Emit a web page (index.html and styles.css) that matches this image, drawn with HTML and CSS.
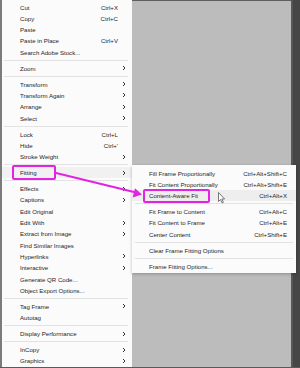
FILE: index.html
```html
<!DOCTYPE html>
<html>
    <head>
        <meta charset="utf-8">
        <title>Context menu - Fitting</title>
        <link rel="stylesheet" href="styles.css">
    </head>
    <body>
        <div class="screen">
            <div class="edge"></div>
            <div class="menu main">
                <div class="item"><span class="lbl">Cut</span><span class="key">Ctrl+X</span><span class="arr"></span></div>
                <div class="item"><span class="lbl">Copy</span><span class="key">Ctrl+C</span><span class="arr"></span></div>
                <div class="item"><span class="lbl">Paste</span><span class="arr"></span></div>
                <div class="item"><span class="lbl">Paste in Place</span><span class="key">Ctrl+V</span><span class="arr"></span></div>
                <div class="item"><span class="lbl">Search Adobe Stock...</span><span class="arr"></span></div>
                <div class="sep"></div>
                <div class="item"><span class="lbl">Zoom</span><span class="arr sub-on"></span></div>
                <div class="sep"></div>
                <div class="item"><span class="lbl">Transform</span><span class="arr sub-on"></span></div>
                <div class="item"><span class="lbl">Transform Again</span><span class="arr sub-on"></span></div>
                <div class="item"><span class="lbl">Arrange</span><span class="arr sub-on"></span></div>
                <div class="item"><span class="lbl">Select</span><span class="arr sub-on"></span></div>
                <div class="sep"></div>
                <div class="item"><span class="lbl">Lock</span><span class="key">Ctrl+L</span><span class="arr"></span></div>
                <div class="item"><span class="lbl">Hide</span><span class="key">Ctrl+'</span><span class="arr"></span></div>
                <div class="item"><span class="lbl">Stroke Weight</span><span class="arr sub-on"></span></div>
                <div class="sep"></div>
                <div class="item hot"><span class="lbl">Fitting</span><span class="arr sub-on"></span></div>
                <div class="sep"></div>
                <div class="item"><span class="lbl">Effects</span><span class="arr sub-on"></span></div>
                <div class="item"><span class="lbl">Captions</span><span class="arr sub-on"></span></div>
                <div class="item"><span class="lbl">Edit Original</span><span class="arr"></span></div>
                <div class="item"><span class="lbl">Edit With</span><span class="arr sub-on"></span></div>
                <div class="item"><span class="lbl">Extract from Image</span><span class="arr sub-on"></span></div>
                <div class="item"><span class="lbl">Find Similar Images</span><span class="arr"></span></div>
                <div class="item"><span class="lbl">Hyperlinks</span><span class="arr sub-on"></span></div>
                <div class="item"><span class="lbl">Interactive</span><span class="arr sub-on"></span></div>
                <div class="item"><span class="lbl">Generate QR Code...</span><span class="arr"></span></div>
                <div class="item"><span class="lbl">Object Export Options...</span><span class="arr"></span></div>
                <div class="sep"></div>
                <div class="item"><span class="lbl">Tag Frame</span><span class="arr sub-on"></span></div>
                <div class="item"><span class="lbl">Autotag</span><span class="arr"></span></div>
                <div class="sep"></div>
                <div class="item"><span class="lbl">Display Performance</span><span class="arr sub-on"></span></div>
                <div class="sep"></div>
                <div class="item"><span class="lbl">InCopy</span><span class="arr sub-on"></span></div>
                <div class="item"><span class="lbl">Graphics</span><span class="arr sub-on"></span></div>
            </div>
            <div class="canvas"></div>
            <div class="strip"></div>
        </div>

        <!-- submenu of "Fitting", floats over the canvas -->
        <div class="menu fit">
            <div class="item"><span class="lbl">Fill Frame Proportionally</span><span class="key">Ctrl+Alt+Shift+C</span></div>
            <div class="item"><span class="lbl">Fit Content Proportionally</span><span class="key">Ctrl+Alt+Shift+E</span></div>
            <div class="item on"><span class="lbl">Content-Aware Fit</span><span class="key">Ctrl+Alt+X</span></div>
            <div class="sep"></div>
            <div class="item"><span class="lbl">Fit Frame to Content</span><span class="key">Ctrl+Alt+C</span></div>
            <div class="item"><span class="lbl">Fit Content to Frame</span><span class="key">Ctrl+Alt+E</span></div>
            <div class="item"><span class="lbl">Center Content</span><span class="key">Ctrl+Shift+E</span></div>
            <div class="sep"></div>
            <div class="item"><span class="lbl">Clear Frame Fitting Options</span></div>
            <div class="sep"></div>
            <div class="item"><span class="lbl">Frame Fitting Options...</span></div>
        </div>

        <!-- annotation: boxes, arrow and mouse pointer -->
        <div class="box box-fitting"></div>
        <div class="box box-aware"></div>
        <svg class="marks" width="300" height="368" viewBox="0 0 300 368">
            <line x1="56" y1="173" x2="134" y2="192" stroke="#e323e3" stroke-width="2" stroke-linecap="round"/>
            <polygon points="142,194.5 135,188.2 132.6,197.4" fill="#e323e3"/>
            <path d="M218.5 192.5 v9 l2-2 l1.6 3.4 l1.3-.6 l-1.6-3.3 h2.8 z" fill="#fff" stroke="#555" stroke-width=".8" stroke-linejoin="round"/>
        </svg>
    </body>
</html>
```

FILE: styles.css
```css
body{
    margin: 0;
    font-family: "Liberation Sans", Arial, sans-serif;
    font-size: 6.1px;
    color: #1e1e1e;
    background-color: #bcbcbc;
}
.screen{
    display: flex;
    height: 367px;
    border-bottom: 1px solid #5a5a5a;
    overflow: hidden;
}
.edge{
    width: 2px;
    background-color: #7b7b7b;
}
.menu{
    background-color: #fbfbfb;
}
.main{
    width: 130px;
    padding-top: 1.4px;
}
.canvas{
    flex: 1;
    border-top: 1px solid #5e5e5e;
}
.strip{
    width: 9px;
    background-color: #464646;
    border-left: 2px solid #575757;
    box-sizing: border-box;
}

/* rows */
.item{
    display: flex;
    align-items: center;
    height: 11.3px;
    white-space: nowrap;
}
.main .item{
    padding: 0 3px 0 18px;
}
.lbl{
    flex: 1;
}
.main .key{
    margin-right: 1px;
}
.arr{
    width: 10px;
    height: 11.3px;
}
.sub-on{
    background: no-repeat center/4px 6px url("data:image/svg+xml;utf8,<svg xmlns='http://www.w3.org/2000/svg' viewBox='0 0 4 6'><path d='M1 1l2 2-2 2' fill='none' stroke='%23333' stroke-width='1'/></svg>");
}
.hot{
    background-color: #f1f1f1;
}
.sep{
    height: 4.7px;
    display: flex;
    align-items: center;
    padding: 0 4px 0 2px;
}
.sep::before{
    content: "";
    flex: 1;
    height: 1px;
    background-color: #e2e2e2;
}

/* Fitting submenu */
.fit{
    position: absolute;
    left: 132px;
    top: 165px;
    width: 164px;
    padding: 2.4px 0 1.4px;
    box-shadow: 0 1px 3px rgba(0,0,0,.25);
}
.fit .item{
    padding: 0 9px 0 17px;
}
.fit .sep{
    padding: 0 3px 0 3px;
}
.fit .on{
    background-color: #eeeeee;
}

/* annotation */
.box{
    position: absolute;
    border: 2px solid #e323e3;
    border-radius: 2px;
    box-sizing: border-box;
}
.box-fitting{
    left: 12px;
    top: 165px;
    width: 44px;
    height: 15px;
}
.box-aware{
    left: 143px;
    top: 189px;
    width: 67px;
    height: 14px;
}
.marks{
    position: absolute;
    left: 0;
    top: 0;
    pointer-events: none;
}
```
